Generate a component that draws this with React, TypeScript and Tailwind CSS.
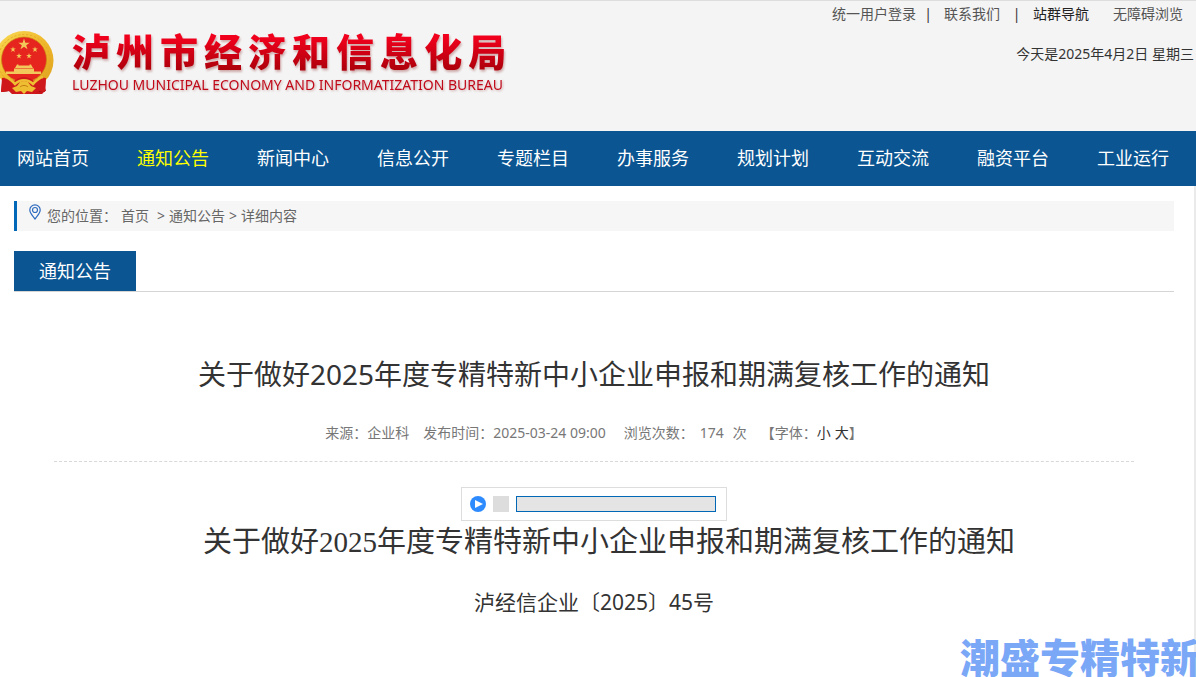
import React from "react";

const NAV = [
  "网站首页",
  "通知公告",
  "新闻中心",
  "信息公开",
  "专题栏目",
  "办事服务",
  "规划计划",
  "互动交流",
  "融资平台",
  "工业运行",
];

const BUREAU = "泸州市经济和信息化局";

const STAR = "M0 -1L.225 -.309L.951 -.309L.363 .118L.588 .809L0 .382L-.588 .809L-.363 .118L-.951 -.309L-.225 -.309Z";

function Emblem() {
  return (
    <svg viewBox="0 0 54 64" className="h-16 w-[54px] shrink-0" aria-hidden="true">
      <defs>
        <linearGradient id="gold" x1="0" y1="0" x2="1" y2="1">
          <stop offset="0" stopColor="#f9dc55" />
          <stop offset="0.5" stopColor="#f0b92d" />
          <stop offset="1" stopColor="#dda01c" />
        </linearGradient>
      </defs>
      <path d="M3 44L1 61L9 60L12 63L42 63L45 60L46 45Z" fill="#c9151b" />
      <path d="M1 61L4 50L12 54L9 60Z M46 60L43 50L35 54L39 61Z" fill="#a50d12" />
      <circle cx="24" cy="29.5" r="29.5" fill="url(#gold)" />
      <circle cx="24" cy="29.5" r="26" fill="none" stroke="#e3a925" strokeWidth="1" strokeDasharray="2 2" />
      <circle cx="24" cy="28.5" r="22.5" fill="#e6251f" stroke="#c98412" strokeWidth="0.7" />
      <g fill="#f3c85a">
        <path d={STAR} transform="translate(24 13.5) scale(6)" />
        <path d={STAR} transform="translate(13 18.5) scale(3)" />
        <path d={STAR} transform="translate(35 18.5) scale(3)" />
        <path d={STAR} transform="translate(19 25) scale(3)" />
        <path d={STAR} transform="translate(29 25) scale(3)" />
        <path d="M17 33.5L18.5 33.5L18.5 34.5H29.5L29.5 33.5L31 33.5L33 37H15Z" />
        <path d="M14 37.5H34V40.5H41V43H6V40.5H14Z" />
      </g>
      <path d="M2 47C8 46 11 47 14 50C18 47 21 46 24 46C27 46 30 47 34 50C37 47 40 46 46 47L45 61L39 60L35 63H13L9 60L1 61Z" fill="#cf181b" />
      <path d="M5 46C10 47 12 50 15 53C20 48 28 48 33 53C36 50 38 47 43 46" fill="none" stroke="#efbd32" strokeWidth="2.6" />
      <path d="M17 55L20 51L24 50L28 51L31 55L36 57L32 61L27 60L24 63L21 60L16 61L12 57Z" fill="#efbd32" />
      <path d="M20 56C22 54 26 54 28 56" fill="none" stroke="#c47e12" strokeWidth="1" />
    </svg>
  );
}

function PinIcon() {
  return (
    <svg viewBox="0 0 12 16" className="-mt-2 h-4 w-3 shrink-0" fill="none" stroke="#2f6bc0" strokeWidth="1.2" aria-hidden="true">
      <path d="M6 15C4.5 12.5 .8 9.5 .8 6A5.2 5.2 0 0 1 11.2 6C11.2 9.5 7.5 12.5 6 15Z" />
      <circle cx="6" cy="6" r="2.5" />
    </svg>
  );
}

export default function App() {
  return (
    <div className="relative flex min-h-screen flex-col overflow-hidden bg-white font-['Noto_Sans','Noto_Sans_CJK_SC',sans-serif] text-sm font-normal text-[#333]">
      <header className="flex h-[131px] items-start justify-between border-t border-[#ddd] bg-[#f4f4f4]">
        <div className="flex gap-[18px] pt-7">
          <a href="#home" aria-label="首页" className="flex pt-[2px]">
            <Emblem />
          </a>
          <div>
            <h1
              aria-label={BUREAU}
              className="flex gap-[6px] text-[38px] leading-[44px] font-black drop-shadow-[1px_2px_1px_rgba(120,0,0,0.3)]"
            >
              {BUREAU.split("").map((ch) => (
                <span key={ch} className="bg-linear-to-b from-[#f0001c] from-20% to-[#b0000c] to-90% bg-clip-text text-transparent">
                  {ch}
                </span>
              ))}
            </h1>
            <p className="pt-[2px] text-sm leading-5 whitespace-nowrap text-[#c00a1a] drop-shadow-[1px_1px_1px_rgba(120,0,0,0.3)]">
              LUZHOU MUNICIPAL ECONOMY AND INFORMATIZATION BUREAU
            </p>
          </div>
        </div>
        <div className="flex flex-col items-end gap-5">
          <div className="flex pt-[3px] pr-[13px] leading-5 text-[#555]">
            <a href="#login">统一用户登录</a>
            <span className="w-7 pr-1 text-center text-[#333]">|</span>
            <a href="#contact">联系我们</a>
            <span className="w-[33px] text-center text-[#333]">|</span>
            <a href="#sites" className="text-[#222]">站群导航</a>
            <a href="#accessible" className="ml-6">无障碍浏览</a>
          </div>
          <p className="pr-[2px] leading-5 text-[#333]">今天是2025年4月2日 星期三</p>
        </div>
      </header>

      <nav className="flex h-[55px] shrink-0 items-center justify-between bg-[#0a5592] pr-[27px] pb-[2px] pl-[17px] text-lg text-white">
        {NAV.map((item) => (
          <a key={item} href={"#" + item} className={item === "通知公告" ? "text-[#ff0]" : ""}>
            {item}
          </a>
        ))}
      </nav>

      <main className="grow border-r-2 border-[#eaeaea] pt-[15px] pr-5 pl-[14px]">
        <div className="flex h-[30px] items-center border-l-3 border-[#0068b7] bg-[#f6f6f6] pl-3 text-[#666]">
          <PinIcon />
          <span className="ml-[6px]">您的位置：</span>
          <a href="#home" className="ml-1">首页</a>
          <span className="ml-2">&gt;</span>
          <a href="#notice" className="ml-1">通知公告</a>
          <span className="ml-1">&gt;</span>
          <span className="ml-1">详细内容</span>
        </div>

        <div className="mt-5 flex border-b border-[#d5d5d5]">
          <h2 className="bg-[#0a5592] px-[25px] text-lg leading-10 text-white">通知公告</h2>
        </div>

        <article className="px-10 pt-[62px] text-center">
          <h2 className="text-[28px] leading-10">关于做好2025年度专精特新中小企业申报和期满复核工作的通知</h2>
          <div className="mt-[29px] flex justify-center border-b border-dashed border-[#d8d8d8] pb-[18px] leading-5 text-[#777]">
            <span>来源：企业科</span>
            <span className="ml-[14px]">发布时间：2025-03-24 09:00</span>
            <span className="ml-[18px]">浏览次数：</span>
            <span className="ml-[6px]">174</span>
            <span className="ml-[9px]">次</span>
            <span className="ml-[14px]">【字体：</span>
            <button type="button" className="text-[#333]">小</button>
            <button type="button" className="ml-1 text-[#333]">大</button>
            <span>】</span>
          </div>

          <div className="mx-auto mt-[25px] flex h-[34px] w-[266px] items-center border border-[#ddd] px-2">
            <button type="button" aria-label="播放" className="size-4">
              <svg viewBox="0 0 16 16" className="size-4">
                <circle cx="8" cy="8" r="8" fill="#2e8bff" />
                <path d="M5 4L13 8L5 12Z" fill="#fff" />
              </svg>
            </button>
            <button type="button" aria-label="停止" className="ml-[7px] size-4 bg-[#ddd]" />
            <div role="progressbar" aria-label="播放进度" className="ml-[7px] h-4 w-[200px] border border-[#0068b7] bg-[#e4e4e4]" />
          </div>

          <p className="mt-px pl-[30px] font-['Liberation_Serif','Noto_Sans_CJK_SC',sans-serif] text-[29px] leading-10">
            关于做好2025年度专精特新中小企业申报和期满复核工作的通知
          </p>
          <p className="mt-5 text-[21px] leading-10">泸经信企业〔2025〕45号</p>
        </article>
      </main>

      <div className="pointer-events-none absolute -right-1 -bottom-1 text-[40px] leading-[46px] font-black whitespace-nowrap text-[#7ba7f7]">
        潮盛专精特新
      </div>
    </div>
  );
}
